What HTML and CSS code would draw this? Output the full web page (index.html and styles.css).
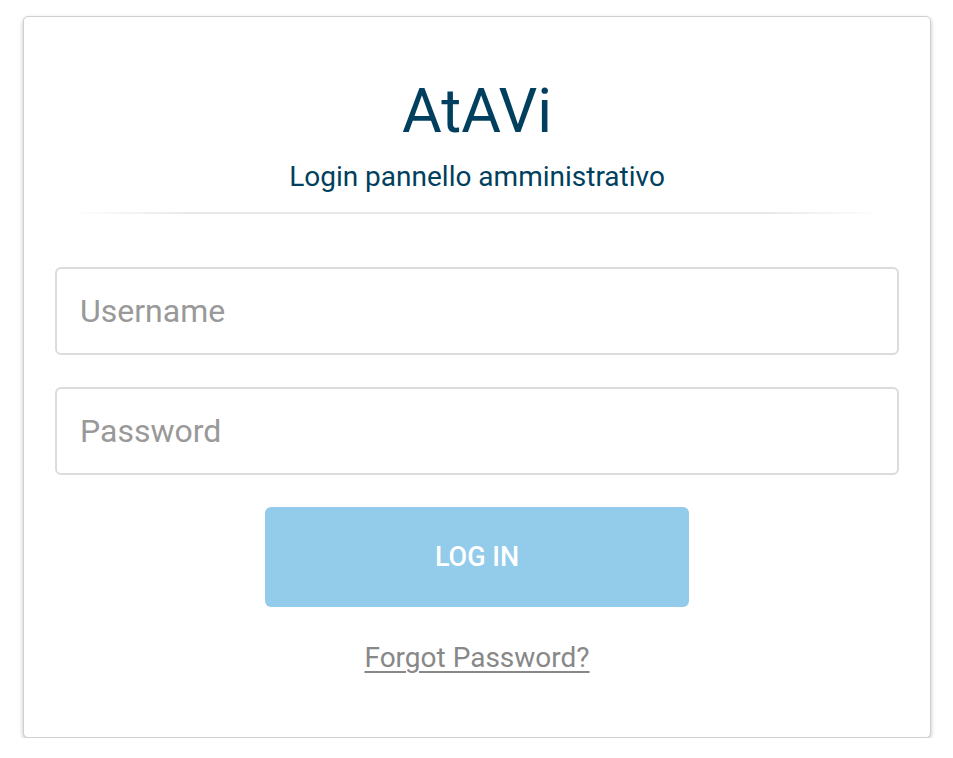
FILE: index.html
```html
<!DOCTYPE html>
<html lang="it">
<head>
<meta charset="utf-8">
<title>AtAVi - Login</title>
<link rel="stylesheet" href="styles.css">
</head>
<body>
<main class="card">
  <header class="card-header">
    <h1 class="title">AtAVi</h1>
    <p class="subtitle">Login pannello amministrativo</p>
    <hr class="divider">
  </header>
  <form class="form">
    <input class="field" type="text" placeholder="Username">
    <input class="field" type="password" placeholder="Password">
    <button class="btn" type="button">LOG IN</button>
    <a class="forgot" href="#">Forgot Password?</a>
  </form>
</main>
</body>
</html>
```
FILE: styles.css
```css
html, body {
  margin: 0;
  padding: 0;
  background: #fff;
}
body {
  font-family: Roboto, "Liberation Sans", sans-serif;
  padding-top: 16px;
}
.card {
  box-sizing: border-box;
  width: 908px;
  margin: 0 0 0 23px;
  border: 1px solid #d0d0d0;
  border-radius: 5px;
  box-shadow: 0 2px 4px rgba(0,0,0,0.25);
  padding: 0 31px 62px;
  background: #fff;
}
.card-header {
  text-align: center;
  padding-top: 58px;
}
.title {
  margin: 0;
  font-weight: 400;
  font-size: 61px;
  line-height: 72px;
  color: #013f5e;
}
.subtitle {
  margin: 13px 0 0;
  font-size: 28px;
  line-height: 34px;
  color: #013f5e;
}
.divider {
  border: 0;
  height: 2px;
  margin: 18px 15px 0;
  background: linear-gradient(to right, rgba(232,232,232,0), #e8e8e8 15%, #e8e8e8 85%, rgba(232,232,232,0));
}
.form {
  display: flex;
  flex-direction: column;
  align-items: center;
  padding-top: 53px;
}
.field {
  box-sizing: border-box;
  width: 100%;
  height: 88px;
  border: 2px solid #dcdcdc;
  border-radius: 6px;
  padding: 0 23px;
  font-family: Roboto, "Liberation Sans", sans-serif;
  font-size: 32px;
  color: #333;
  outline: none;
  margin-bottom: 32px;
}
.field::placeholder {
  color: #999;
}
.btn {
  width: 424px;
  height: 100px;
  border: 0;
  border-radius: 6px;
  background: #93cbeb;
  color: #fff;
  font-family: Roboto, "Liberation Sans", sans-serif;
  font-size: 27px;
  font-weight: 500;
}
.forgot {
  margin-top: 34px;
  font-size: 28px;
  line-height: 34px;
  color: #888;
  text-decoration: underline;
  text-decoration-thickness: 2px;
  text-underline-offset: 4px;
}
```
